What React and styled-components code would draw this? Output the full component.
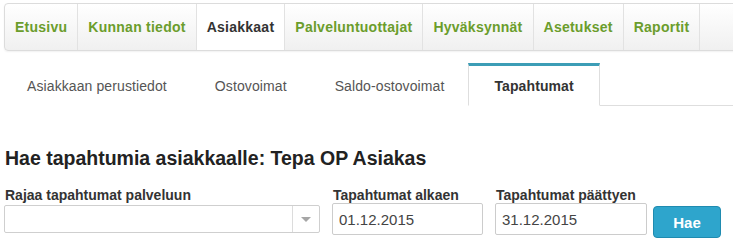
import React from "react";
import styled, { createGlobalStyle } from "styled-components";

const GlobalStyle = createGlobalStyle`
  html, body {
    margin: 0;
    padding: 0;
    background: #fff;
    overflow: hidden;
  }
  body {
    font-family: "Liberation Sans", Arial, sans-serif;
    color: #333;
  }
`;

const mainItems = [
  "Etusivu",
  "Kunnan tiedot",
  "Asiakkaat",
  "Palveluntuottajat",
  "Hyväksynnät",
  "Asetukset",
  "Raportit",
];

const subTabs = [
  "Asiakkaan perustiedot",
  "Ostovoimat",
  "Saldo-ostovoimat",
  "Tapahtumat",
];

const App = () => {
  return (
    <Page>
      <GlobalStyle />
      <NavBar>
        {mainItems.map((item) => (
          <NavItem key={item} active={item === "Asiakkaat"}>
            {item}
          </NavItem>
        ))}
      </NavBar>
      <Tabs>
        {subTabs.map((tab) => (
          <Tab key={tab} active={tab === "Tapahtumat"}>
            {tab}
          </Tab>
        ))}
      </Tabs>
      <Heading>Hae tapahtumia asiakkaalle: Tepa OP Asiakas</Heading>
      <FormRow>
        <Field width="316px">
          <Label>Rajaa tapahtumat palveluun</Label>
          <Select>
            <SelectValue />
            <SelectArrow>
              <Caret />
            </SelectArrow>
          </Select>
        </Field>
        <Field width="151px">
          <Label>Tapahtumat alkaen</Label>
          <Input defaultValue="01.12.2015" />
        </Field>
        <Field width="152px">
          <Label>Tapahtumat päättyen</Label>
          <Input defaultValue="31.12.2015" />
        </Field>
        <Button>Hae</Button>
      </FormRow>
    </Page>
  );
};
export default App;

const Page = styled.div`
  padding: 3px 0 0 4px;
`;

const NavBar = styled.nav`
  display: flex;
  width: 760px;
  height: 46px;
  border: 1px solid #dcdcdc;
  border-radius: 4px;
  background: linear-gradient(#ffffff, #f0f0f0);
  box-shadow: 0 1px 2px rgba(0, 0, 0, 0.06);
  overflow: hidden;
`;

const NavItem = styled.div`
  display: flex;
  align-items: center;
  padding: 0 10px;
  border-right: 1px solid #e2e2e2;
  font-size: 14px;
  letter-spacing: 0.25px;
  font-weight: 700;
  color: ${(p) => (p.active ? "#333" : "#6b9d2c")};
  background: ${(p) => (p.active ? "#fff" : "transparent")};
  white-space: nowrap;
`;

const Tabs = styled.div`
  display: flex;
  margin: 12px 0 0 -1px;
  border-bottom: 1px solid #dedede;
`;

const Tab = styled.div`
  display: flex;
  align-items: center;
  height: 39px;
  margin-bottom: -1px;
  font-size: 14px;
  letter-spacing: 0.1px;
  white-space: nowrap;
  color: ${(p) => (p.active ? "#333" : "#555")};
  font-weight: ${(p) => (p.active ? 700 : 400)};
  border: 1px solid ${(p) => (p.active ? "#dedede" : "transparent")};
  border-top: 3px solid ${(p) => (p.active ? "#3c9db6" : "transparent")};
  border-bottom-color: ${(p) => (p.active ? "#fff" : "transparent")};
  background: #fff;
  padding: 0 ${(p) => (p.active ? "25px" : "23px")};
`;

const Heading = styled.h2`
  margin: 41px 0 0 1px;
  font-size: 19.5px;
  line-height: 22px;
  font-weight: 700;
  color: #222;
`;

const FormRow = styled.div`
  display: flex;
  align-items: flex-start;
  margin-top: 18px;
`;

const Field = styled.div`
  display: flex;
  flex-direction: column;
  width: ${(p) => p.width};
  margin-right: 12px;
`;

const Label = styled.label`
  font-size: 14px;
  line-height: 16px;
  font-weight: 700;
  color: #333;
  white-space: nowrap;
  padding-left: 1px;
`;

const Select = styled.div`
  display: flex;
  height: 26px;
  margin-top: 2px;
  border: 1px solid #cfcfcf;
  border-radius: 2px;
  background: #fff;
`;

const SelectValue = styled.div`
  flex: 1;
`;

const SelectArrow = styled.div`
  display: flex;
  align-items: center;
  justify-content: center;
  width: 26px;
  border-left: 1px solid #dcdcdc;
`;

const Caret = styled.span`
  width: 0;
  height: 0;
  border-left: 5px solid transparent;
  border-right: 5px solid transparent;
  border-top: 5px solid #a6a6a6;
`;

const Input = styled.input`
  box-sizing: border-box;
  width: 100%;
  height: 32px;
  padding: 0 6px;
  border: 1px solid #cccccc;
  border-radius: 2px;
  font-family: "Liberation Sans", Arial, sans-serif;
  font-size: 15px;
  color: #444;
  outline: none;
`;

const Button = styled.button`
  box-sizing: border-box;
  width: 68px;
  height: 32px;
  margin: 19px 0 0 -6px;
  border: 1px solid #1f8bb0;
  border-radius: 4px;
  background: #2ea5cc;
  color: #fff;
  font-family: "Liberation Sans", Arial, sans-serif;
  font-size: 15px;
  font-weight: 700;
`;
